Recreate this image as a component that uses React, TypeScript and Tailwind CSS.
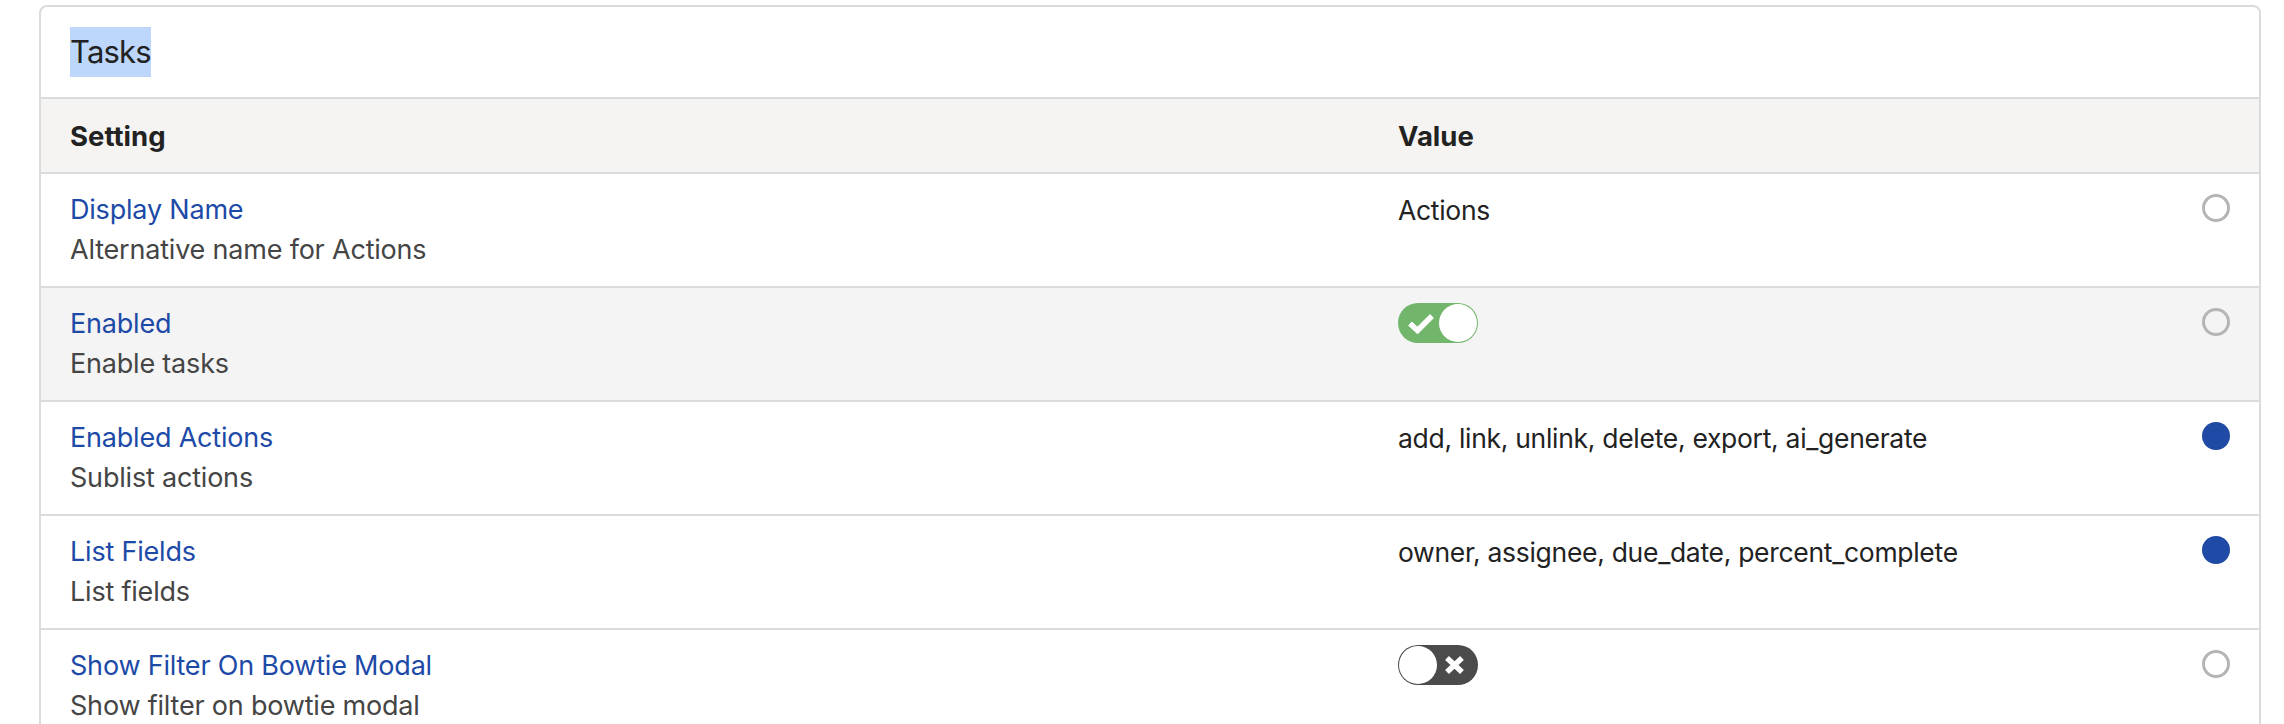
import React from "react";

type Row = {
  name: string;
  desc: string;
  value: React.ReactNode;
  filled: boolean;
  shaded?: boolean;
};

function ToggleOn() {
  return (
    <div className="relative -mt-[1px] h-[40px] w-[80px] rounded-full bg-[#72b66c]">
      <svg className="absolute left-[9px] top-[10px]" width="28" height="21" viewBox="0 0 28 21">
        <path d="M3 10.5 L10.5 17.5 L25 3" fill="none" stroke="#ffffff" strokeWidth="5.5" strokeLinejoin="miter" />
      </svg>
      <div className="absolute right-[1px] top-[1px] h-[38px] w-[38px] rounded-full bg-white" />
    </div>
  );
}

function ToggleOff() {
  return (
    <div className="relative -mt-[1px] h-[40px] w-[80px] rounded-full bg-[#4b4b4b]">
      <div className="absolute left-[1px] top-[1px] h-[38px] w-[38px] rounded-full bg-white" />
      <svg className="absolute left-[46px] top-[10px]" width="21" height="20" viewBox="0 0 21 20">
        <path d="M3 3 L18 17 M18 3 L3 17" stroke="#ffffff" strokeWidth="5.5" />
      </svg>
    </div>
  );
}

function Radio({ filled }: { filled: boolean }) {
  return filled ? (
    <div className="mt-[4px] h-[28px] w-[28px] rounded-full bg-[#1f4aa5]" />
  ) : (
    <div className="mt-[4px] h-[28px] w-[28px] rounded-full border-[3px] border-[#b5b5b5] bg-transparent" />
  );
}

const rows: Row[] = [
  { name: "Display Name", desc: "Alternative name for Actions", value: "Actions", filled: false },
  { name: "Enabled", desc: "Enable tasks", value: <ToggleOn />, filled: false, shaded: true },
  {
    name: "Enabled Actions",
    desc: "Sublist actions",
    value: "add, link, unlink, delete, export, ai_generate",
    filled: true,
  },
  {
    name: "List Fields",
    desc: "List fields",
    value: "owner, assignee, due_date, percent_complete",
    filled: true,
  },
  { name: "Show Filter On Bowtie Modal", desc: "Show filter on bowtie modal", value: <ToggleOff />, filled: false },
];

export default function App() {
  return (
    <div className="min-h-screen bg-white pl-[39px] pr-[23px] pt-[5px] font-['Inter',sans-serif] text-[#222222]">
      <div className="overflow-hidden rounded-[8px] border-2 border-[#dbdbdb]">
        <div className="px-[29px] py-[20px] leading-[50px]">
          <span className="inline-block bg-[#bcd7fb] align-top text-[31px] leading-[50px] tracking-[-0.8px] text-[#222222]">
            Tasks
          </span>
        </div>
        <div className="grid grid-cols-[1328px_1fr_86px] border-t-2 border-[#dbdbdb] bg-[#f5f4f2]">
          <div className="pb-[16px] pl-[29px] pt-[17px] text-[27.5px] font-bold leading-[40px]">Setting</div>
          <div className="pb-[16px] pl-[29px] pt-[17px] text-[27.5px] font-bold leading-[40px]">Value</div>
          <div />
        </div>
        {rows.map((r) => (
          <div
            key={r.name}
            className={`grid grid-cols-[1328px_1fr_86px] border-t-2 border-[#dbdbdb] ${
              r.shaded ? "bg-[#f4f4f4]" : "bg-white"
            }`}
          >
            <div className="pb-[16px] pl-[29px] pt-[16px] text-[27px] leading-[40px] tracking-[-0.2px]">
              <div className="text-[#1d4aa7]">{r.name}</div>
              <div className="text-[#454545]">{r.desc}</div>
            </div>
            <div className="pb-[16px] pl-[29px] pt-[16px] text-[26.5px] leading-[40px] tracking-[-0.3px] text-[#222222]">
              {r.value}
            </div>
            <div className="flex justify-end pr-[29px] pt-[16px]">
              <Radio filled={r.filled} />
            </div>
          </div>
        ))}
      </div>
    </div>
  );
}
